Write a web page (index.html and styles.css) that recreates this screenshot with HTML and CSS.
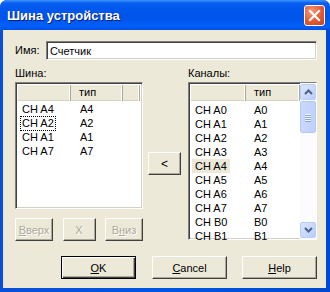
FILE: index.html
```html
<!DOCTYPE html>
<html lang="ru">
<head>
    <meta charset="UTF-8">
    <title>Шина устройства</title>
    <link rel="stylesheet" href="styles.css">
</head>
<body>
    <div class="window">
        <div class="titlebar">
            <span class="title">Шина устройства</span>
            <span class="close">
                <svg width="13" height="13" viewBox="0 0 13 13">
                    <path d="M2 2 L11 11 M11 2 L2 11" stroke="#fff" stroke-width="2.2" stroke-linecap="square"/>
                </svg>
            </span>
        </div>

        <div class="client">
            <div class="name-row">
                <label class="name-label">Имя:</label>
                <div class="edit">Счетчик</div>
            </div>

            <div class="lists">
                <div class="list-label">Шина:</div>
                <div></div>
                <div class="list-label">Каналы:</div>

                <div class="left-col">
                    <div class="listview bus-list">
                        <div class="header">
                            <span class="hcol c1"></span>
                            <span class="hcol c2">тип</span>
                            <span class="hcol c3"></span>
                        </div>
                        <div class="rows">
                            <div class="row"><span class="cell c1">CH A4</span><span class="cell">A4</span></div>
                            <div class="row"><span class="cell c1"><span class="focus">CH A2</span></span><span class="cell">A2</span></div>
                            <div class="row"><span class="cell c1">CH A1</span><span class="cell">A1</span></div>
                            <div class="row"><span class="cell c1">CH A7</span><span class="cell">A7</span></div>
                        </div>
                    </div>
                    <div class="order-buttons">
                        <button class="btn small disabled"><u>В</u>верх</button>
                        <button class="btn small disabled">X</button>
                        <button class="btn small disabled">В<u>н</u>из</button>
                    </div>
                </div>

                <div class="middle">
                    <button class="btn add">&lt;</button>
                </div>

                <div class="listview chan-list">
                    <div class="chan-main">
                        <div class="header">
                            <span class="hcol c1"></span>
                            <span class="hcol c2">тип</span>
                        </div>
                        <div class="rows">
                            <div class="row"><span class="cell c1">CH A0</span><span class="cell">A0</span></div>
                            <div class="row"><span class="cell c1">CH A1</span><span class="cell">A1</span></div>
                            <div class="row"><span class="cell c1">CH A2</span><span class="cell">A2</span></div>
                            <div class="row"><span class="cell c1">CH A3</span><span class="cell">A3</span></div>
                            <div class="row"><span class="cell c1"><span class="selected">CH A4</span></span><span class="cell">A4</span></div>
                            <div class="row"><span class="cell c1">CH A5</span><span class="cell">A5</span></div>
                            <div class="row"><span class="cell c1">CH A6</span><span class="cell">A6</span></div>
                            <div class="row"><span class="cell c1">CH A7</span><span class="cell">A7</span></div>
                            <div class="row"><span class="cell c1">CH B0</span><span class="cell">B0</span></div>
                            <div class="row"><span class="cell c1">CH B1</span><span class="cell">B1</span></div>
                        </div>
                    </div>
                    <div class="scrollbar">
                        <div class="sb-btn">
                            <svg width="9" height="6" viewBox="0 0 9 6"><path d="M1 5 L4.5 1.5 L8 5" fill="none" stroke="#4d6185" stroke-width="2"/></svg>
                        </div>
                        <div class="sb-thumb">
                            <span class="grip"></span>
                            <span class="grip"></span>
                            <span class="grip"></span>
                            <span class="grip"></span>
                        </div>
                        <div class="sb-track"></div>
                        <div class="sb-btn">
                            <svg width="9" height="6" viewBox="0 0 9 6"><path d="M1 1 L4.5 4.5 L8 1" fill="none" stroke="#4d6185" stroke-width="2"/></svg>
                        </div>
                    </div>
                </div>
            </div>

            <div class="dialog-buttons">
                <button class="btn wide default"><u>O</u>K</button>
                <button class="btn wide"><u>C</u>ancel</button>
                <button class="btn wide"><u>H</u>elp</button>
            </div>
        </div>
    </div>
</body>
</html>
```

FILE: styles.css
```css
:root {
    --face: #ece9d8;
    --shadow: #aca899;
    --dark: #716f64;
    --text: #000;
    --disabled: #aca899;
}

* {
    margin: 0;
    padding: 0;
    box-sizing: border-box;
}

body {
    background: #fff;
    font-family: "Liberation Sans", Arial, sans-serif;
    font-size: 11px;
    color: var(--text);
}

.window {
    width: 330px;
    height: 292px;
    display: flex;
    flex-direction: column;
    background: linear-gradient(90deg, #0a4fd8, #0055e5 50%, #0049d0);
    border-radius: 7px 7px 0 0;
    overflow: hidden;
}

.titlebar {
    height: 30px;
    flex: none;
    display: flex;
    align-items: center;
    justify-content: space-between;
    padding: 0 5px 0 7px;
    background: linear-gradient(180deg, #3d95ff 0, #0a5ff0 3px, #0058ee 8px, #0054e8 18px, #0060fb 26px, #0050e0 30px);
}

.title {
    color: #fff;
    font-family: "Liberation Sans", Arial, sans-serif;
    font-weight: bold;
    font-size: 13px;
    text-shadow: 1px 1px 0 #0a1e78;
    padding-top: 1px;
}

.close {
    width: 21px;
    height: 21px;
    margin-top: 1px;
    border: 1px solid #fff;
    border-radius: 3px;
    background: radial-gradient(circle at 35% 30%, #f59a7f, #e25a33 55%, #c4401c);
    display: flex;
    align-items: center;
    justify-content: center;
}

.client {
    flex: 1;
    margin: 0 4px 4px 3px;
    background: var(--face);
    padding: 11px 9px 0 12px;
    display: flex;
    flex-direction: column;
}

.name-row {
    display: flex;
    align-items: center;
    height: 18px;
}

.name-label {
    width: 31px;
}

.edit {
    flex: 1;
    height: 19px;
    background: #fff;
    border: 1px solid;
    border-color: #808080 #fff #fff #808080;
    box-shadow: inset 1px 1px 0 #404040, inset -1px -1px 0 #d4d0c8;
    padding: 2px 0 0 3px;
    line-height: 14px;
}

.lists {
    display: grid;
    grid-template-columns: 128px 45px 129px;
    grid-template-rows: 15px auto;
    margin-top: 8px;
}

.list-label {
    line-height: 13px;
}

.left-col {
    display: flex;
    flex-direction: column;
}

.listview {
    background: #fff;
    border: 1px solid;
    border-color: #808080 #fff #fff #808080;
    box-shadow: inset 1px 1px 0 #404040, inset -1px -1px 0 #d4d0c8;
    padding: 2px;
}

.bus-list {
    height: 127px;
}

.chan-list {
    height: 158px;
    display: flex;
}

.chan-main {
    flex: 1;
}

.header {
    display: flex;
    height: 16px;
    background: var(--face);
}

.hcol {
    height: 16px;
    line-height: 15px;
    border-right: 1px solid var(--shadow);
    box-shadow: inset -1px 0 0 #fff, inset 0 -1px 0 #d6d2c2;
    padding-left: 8px;
}

.bus-list .hcol.c1 {
    width: 53px;
}

.bus-list .hcol.c2 {
    width: 52px;
}

.bus-list .hcol.c3 {
    flex: 1;
}

.chan-list .hcol.c1 {
    width: 55px;
}

.chan-list .hcol.c2 {
    flex: 1;
}

.bus-list .rows {
    padding-top: 1px;
}

.chan-list .rows {
    padding-top: 2px;
}

.row {
    display: flex;
    height: 14px;
    line-height: 14px;
}

.cell.c1 {
    padding-left: 4px;
}

.bus-list .cell.c1 {
    width: 62px;
}

.chan-list .cell.c1 {
    width: 63px;
}

.focus {
    display: inline-block;
    outline: 1px dotted #000;
    outline-offset: 0;
    padding: 0 1px;
    margin-left: -1px;
    line-height: 13px;
}

.selected {
    display: inline-block;
    background: var(--face);
    padding: 0 3px;
    margin-left: -3px;
}

.scrollbar {
    width: 16px;
    margin: -2px -2px -2px 0;
    display: flex;
    flex-direction: column;
    background: #fcfcfe;
    padding: 1px 0;
}

.sb-btn {
    height: 16px;
    flex: none;
    border: 1px solid #b8cdf8;
    border-radius: 2px;
    background: linear-gradient(135deg, #dbe6fe, #b9cefb);
    display: flex;
    align-items: center;
    justify-content: center;
}

.sb-thumb {
    height: 32px;
    flex: none;
    margin-top: 1px;
    border: 1px solid #b3c8f5;
    border-radius: 2px;
    background: linear-gradient(90deg, #c9d8fc, #bfd1fb);
    display: flex;
    flex-direction: column;
    align-items: center;
    justify-content: center;
    gap: 1px;
}

.grip {
    width: 6px;
    height: 1px;
    background: #eef3ff;
    box-shadow: 0 1px 0 #8da6dc;
}

.sb-track {
    flex: 1;
}

.btn {
    font-family: "Liberation Sans", Arial, sans-serif;
    font-size: 11px;
    color: #000;
    background: var(--face);
    border: 1px solid;
    border-color: #fff #404040 #404040 #fff;
    box-shadow: inset -1px -1px 0 #aca899;
    height: 23px;
}

.btn u {
    text-decoration: underline;
    text-underline-offset: 1px;
}

.btn.disabled {
    color: var(--disabled);
    text-shadow: 1px 1px 0 #fff;
}

.order-buttons {
    display: flex;
    justify-content: space-between;
    margin-top: 9px;
}

.small {
    width: 38px;
}

.order-buttons .small:nth-child(2) {
    width: 33px;
}

.middle {
    display: flex;
    align-items: flex-start;
    justify-content: center;
    padding: 70px 2px 0 0;
}

.add {
    width: 33px;
    font-size: 12px;
}

.dialog-buttons {
    display: flex;
    justify-content: flex-end;
    gap: 15px;
    margin-top: 15px;
}

.wide {
    width: 75px;
}

.btn.default {
    border: 1px solid #000;
    box-shadow: inset 1px 1px 0 #fff, inset -1px -1px 0 #404040, inset -2px -2px 0 #aca899;
    margin-right: 1px;
}
```
